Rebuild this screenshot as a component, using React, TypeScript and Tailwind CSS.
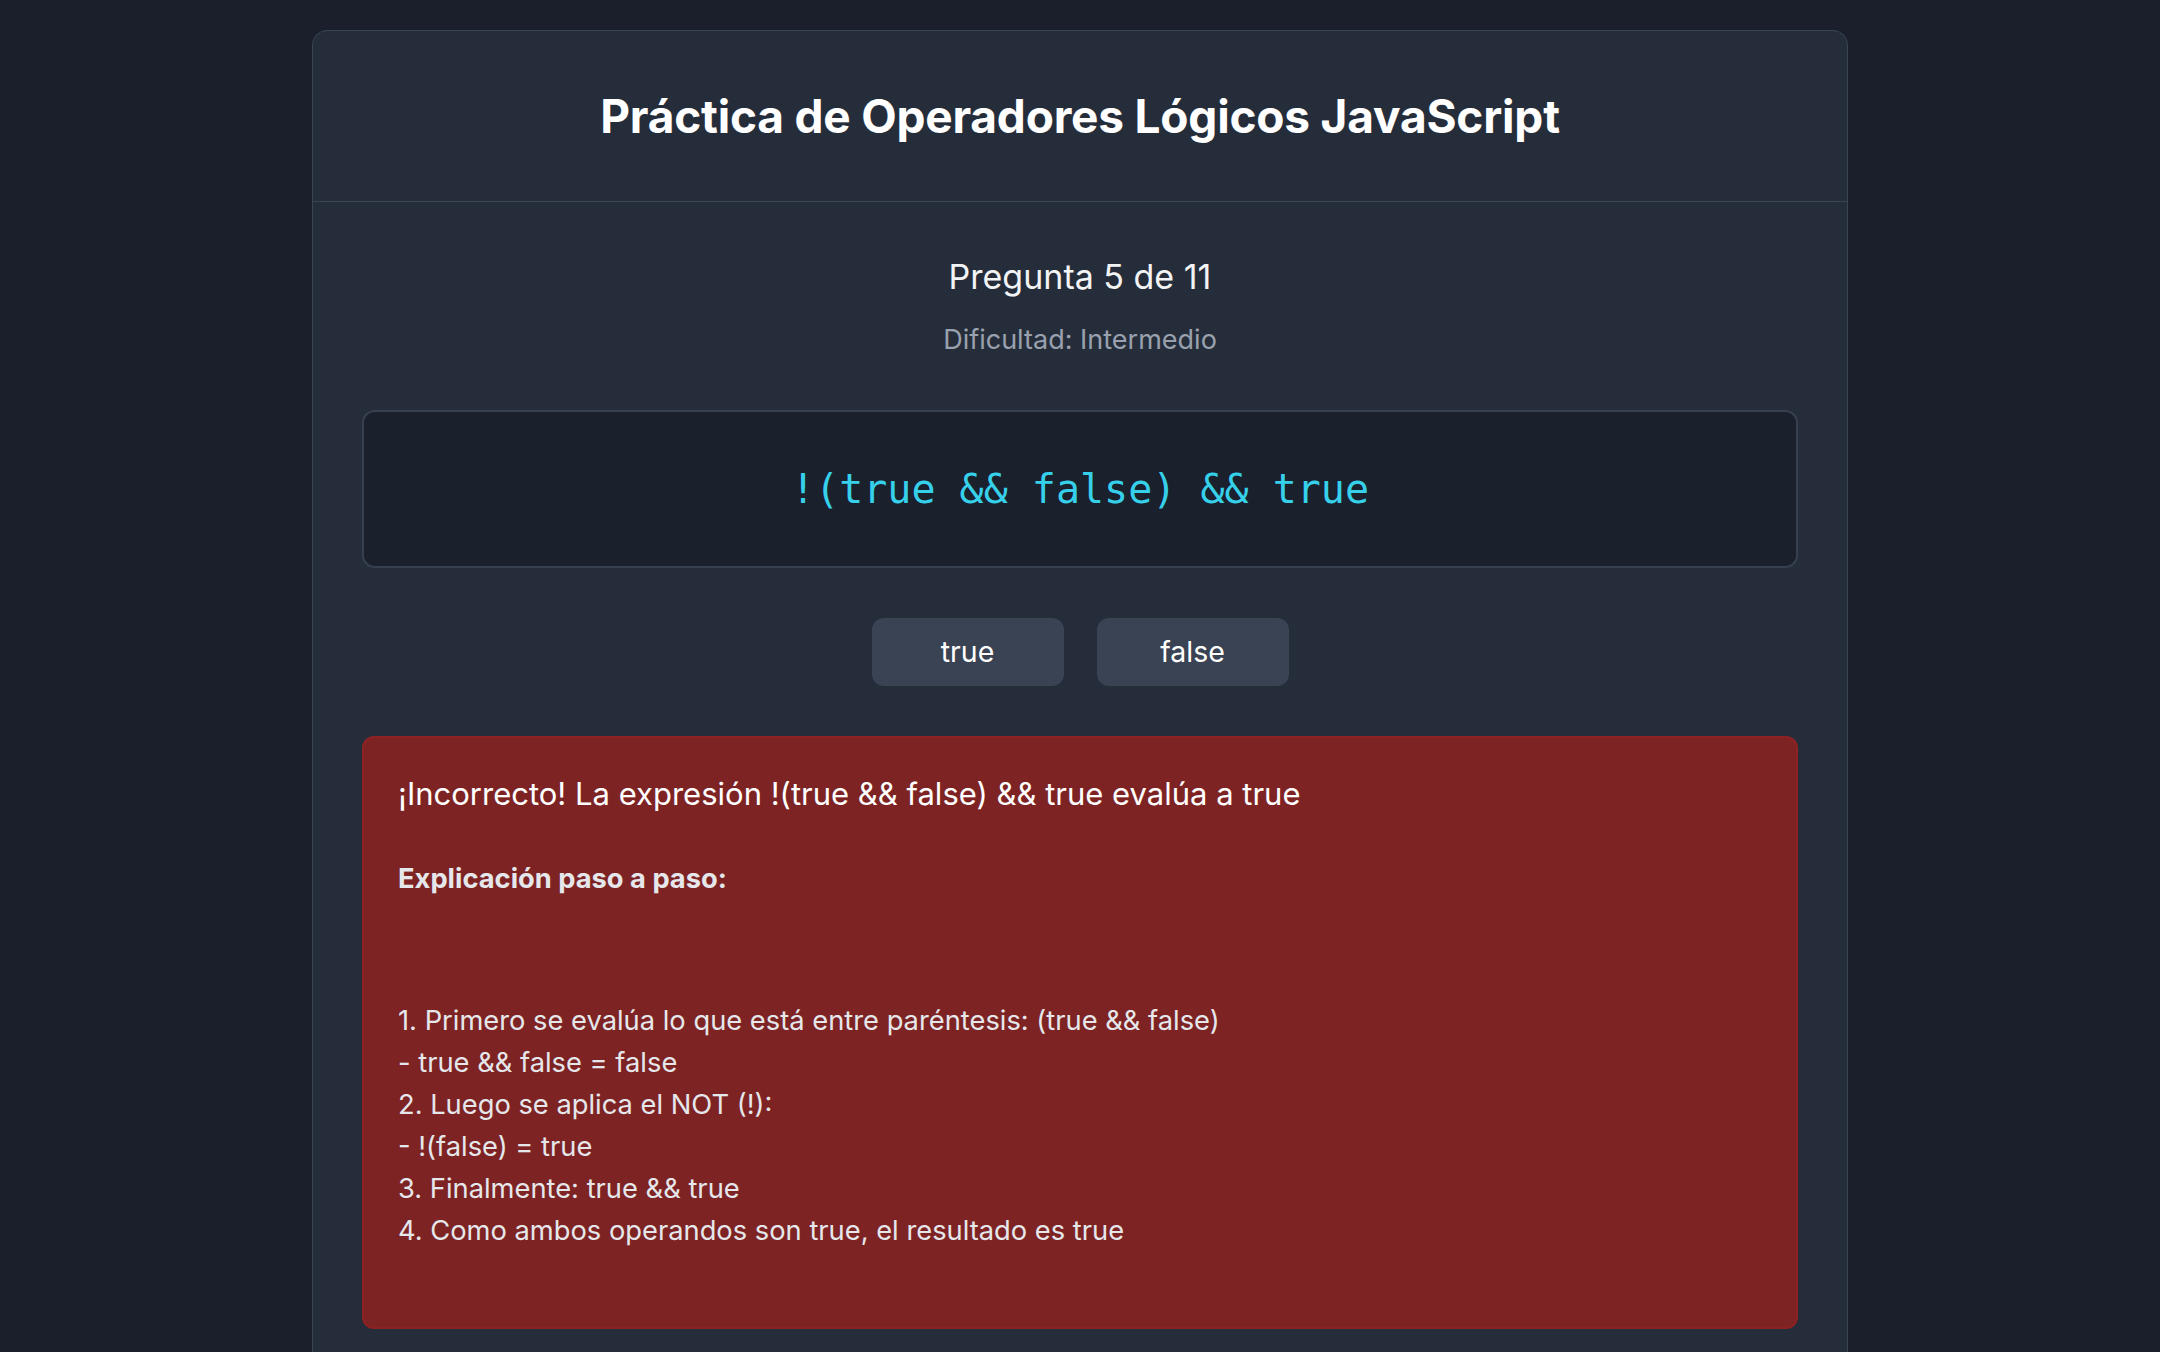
import React from 'react';

const steps = [
  '1. Primero se evalúa lo que está entre paréntesis: (true && false)',
  '- true && false = false',
  '2. Luego se aplica el NOT (!):',
  '- !(false) = true',
  '3. Finalmente: true && true',
  '4. Como ambos operandos son true, el resultado es true',
];

export default function App() {
  return (
    <div className="min-h-screen w-full bg-[#1a1f2b] pt-[30px] font-['Inter',sans-serif]">
      <div className="mx-auto w-[1536px] rounded-[15px] border border-[#3a4453] bg-[#262d3a]">
        {/* Header */}
        <div className="border-b border-[#3a4453] pt-[58px] pb-[58px] text-center">
          <h1 className="text-[46px] font-bold leading-[54px] tracking-[-0.2px] text-white">
            Práctica de Operadores Lógicos JavaScript
          </h1>
        </div>

        {/* Body */}
        <div className="px-[49px] pt-[54px] pb-[48px]">
          <div className="text-center">
            <div className="text-[34px] leading-[42px] text-gray-100">Pregunta 5 de 11</div>
            <div className="mt-[24px] text-[27px] leading-[36px] text-gray-400">Dificultad: Intermedio</div>
          </div>

          <div className="mt-[52px] flex h-[158px] items-center justify-center rounded-[13px] border-2 border-[#364050] bg-[#1a202c]">
            <code className="font-['DejaVu_Sans_Mono',monospace] text-[40px] leading-[60px] text-[#36d0ea]">
              !(true &amp;&amp; false) &amp;&amp; true
            </code>
          </div>

          <div className="mt-[50px] flex justify-center gap-[33px]">
            <button className="h-[68px] w-[192px] rounded-[12px] bg-[#3a4353] text-[28.5px] text-white">
              true
            </button>
            <button className="h-[68px] w-[192px] rounded-[12px] bg-[#3a4353] text-[28.5px] text-white">
              false
            </button>
          </div>

          <div className="mt-[50px] rounded-[12px] border-2 border-[#8e2121] bg-[#7e2323] px-[34px] pt-[35px] pb-[75px]">
            <p className="text-[31px] leading-[42px] text-white">
              ¡Incorrecto! La expresión !(true &amp;&amp; false) &amp;&amp; true evalúa a true
            </p>
            <p className="mt-[46px] text-[27.3px] font-bold leading-[36px] text-gray-200">
              Explicación paso a paso:
            </p>
            <div className="mt-[103px] text-[27.3px] leading-[42px] text-gray-200">
              {steps.map((s) => (
                <div key={s}>{s}</div>
              ))}
            </div>
          </div>
        </div>
      </div>
    </div>
  );
}
